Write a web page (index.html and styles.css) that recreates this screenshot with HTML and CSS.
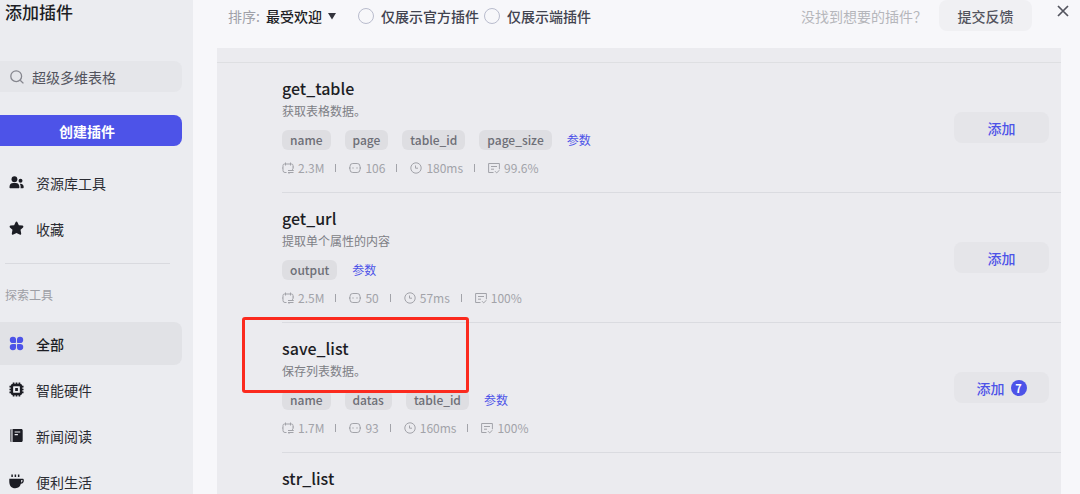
FILE: index.html
```
<!DOCTYPE html>
<html lang="zh-CN">
<head>
    <meta charset="utf-8">
    <title>添加插件</title>
    <meta name="viewport" content="width=device-width, initial-scale=1">
    <link rel="stylesheet" href="styles.css">
</head>
<body>
    <!-- 公共图标 -->
    <svg class="icon-defs" aria-hidden="true">
        <symbol id="i-plug" viewBox="0 0 12 12">
            <path d="M3.500 .5v3M8.500 .5v3M4.500 10.500H3a2 2 0 0 1-2-2v-5A1.500 1.500 0 0 1 2.500 2h7A1.500 1.500 0 0 1 11 3.500V7M0 6h1M11 5h1M6 8.500h5.500L10 7.200M11.500 10.500H6l1.500 1.200"/>
        </symbol>
        <symbol id="i-bot" viewBox="0 0 12 12">
            <rect x="1" y="1.500" width="10" height="9" rx="2.800"/>
            <path d="M.3 5v2M11.700 5v2M4 5.300v1.400M8 5.300v1.400"/>
        </symbol>
        <symbol id="i-clock" viewBox="0 0 12 12">
            <circle cx="6" cy="6" r="5.200"/>
            <path d="M5.500 3.500v2.700h2.500"/>
        </symbol>
        <symbol id="i-rate" viewBox="0 0 12 12">
            <path d="M5.500 10.500H.6v-9h10.800v5.500M3 4.500h6M3 7.200h3M7 9.200l1.700 1.700L11.600 8"/>
        </symbol>
    </svg>

    <div class="dialog">
        <aside class="sidebar">
            <h1>添加插件</h1>
            <label class="search">
                <svg viewBox="0 0 14 14" aria-hidden="true"><circle cx="6.200" cy="6.200" r="5.400"/><path d="M10.200 10.200l3.200 3.200"/></svg>
                <input type="text" value="超级多维表格" aria-label="搜索">
            </label>
            <button class="create" type="button">创建插件</button>

            <nav class="menu">
                <a href="#">
                    <svg viewBox="0 0 16 16" aria-hidden="true"><circle cx="5.800" cy="4.500" r="3.100"/><path d="M.5 13c0-3 1.500-4.600 4-4.600h2.600c2.500 0 4 1.600 4 4.600 0 .8-.4 1.200-1.200 1.200H1.700C.9 14.200.5 13.800.5 13z"/><circle cx="12.300" cy="6.200" r="2.100"/><path d="M11.600 9.300c2.600-.3 4.100 1.200 4.100 3.600 0 .8-.4 1.300-1.200 1.300h-2.200c.4-2-.1-3.800-.7-4.900z"/></svg>
                    资源库工具
                </a>
                <a href="#">
                    <svg viewBox="0 0 16 16" aria-hidden="true"><path d="M7 1.200c.4-.9 1.600-.9 2 0l1.500 3.200 3.800.5c1 .1 1.400 1.200.7 1.900l-2.700 2.600.7 3.900c.2 1-.8 1.700-1.700 1.200L8 12.800l-3.300 1.700c-.9.5-1.900-.2-1.700-1.200l.7-3.900L1 6.800c-.7-.7-.3-1.800.7-1.900l3.800-.5z"/></svg>
                    收藏
                </a>
            </nav>
            <hr>
            <h2>探索工具</h2>
            <nav class="menu">
                <a href="#" class="active">
                    <svg viewBox="0 0 16 16" aria-hidden="true"><path d="M4.200.8a3.300 3.300 0 0 1 3.300 3.400v2.100c0 .8-.4 1.200-1.200 1.200H4.200a3.350 3.350 0 0 1 0-6.700zM11.800.8a3.350 3.350 0 0 1 0 6.700H9.700c-.8 0-1.200-.4-1.200-1.200V4.200A3.300 3.300 0 0 1 11.800.8zM4.200 8.500h2.100c.8 0 1.200.4 1.200 1.200v2.100a3.350 3.350 0 1 1-3.300-3.300zM9.700 8.500h2.100a3.350 3.350 0 1 1-3.300 3.300V9.700c0-.8.4-1.200 1.200-1.200z"/></svg>
                    全部
                </a>
                <a href="#">
                    <svg viewBox="0 0 16 16" aria-hidden="true"><path fill-rule="evenodd" d="M4 .5h1.800v1.300h1.300V.5h1.800v1.300h1.300V.5H12v1.400c1.200.2 2 1 2.100 2.100h1.400v1.800h-1.300v1.300h1.300v1.800h-1.300v1.300h1.300V12h-1.400c-.1 1.200-.9 2-2.100 2.100v1.400h-1.800v-1.300H8.900v1.300H7.100v-1.300H5.800v1.300H4v-1.400c-1.200-.1-2-.9-2.100-2.100H.5v-1.800h1.300V8.900H.5V7.100h1.300V5.800H.5V4h1.400C2 2.900 2.800 2.100 4 1.900zM5 4.500c-.4 0-.6.2-.6.600v5.800c0 .4.200.6.600.6h6c.4 0 .6-.2.600-.6V5.100c0-.4-.2-.6-.6-.6zM6.600 6.500h2.900v3H6.600z"/></svg>
                    智能硬件
                </a>
                <a href="#">
                    <svg viewBox="0 0 16 16" aria-hidden="true"><path d="M1.500 2.200c0-.8.300-1.200 1-1.200v14c-.7 0-1-.4-1-1.200z"/><path fill-rule="evenodd" d="M3.800 1h9.200c1 0 1.600.6 1.600 1.600v10.800c0 1-.6 1.600-1.600 1.600H3.800zM6 3.600v1.200h6V3.600zM6 6.500v1.200h3.500V6.500z"/></svg>
                    新闻阅读
                </a>
                <a href="#">
                    <svg viewBox="0 0 16 16" aria-hidden="true"><path d="M2.500.5h1.600v2.800H2.500zM6 .5h1.600v2.800H6zM9.500.5h1.600v2.800H9.500z"/><path fill-rule="evenodd" d="M.3 5h14.200c.9 0 1.300.6 1.300 1.600 0 2.300-1 3.700-3.200 3.900-.6 2.900-2.400 4.700-5.900 4.700-4.200 0-6.400-2.600-6.400-7.200zM13 6.500v2.600c1-.1 1.400-.9 1.400-2.600z"/></svg>
                    便利生活
                </a>
            </nav>
        </aside>

        <main class="main">
            <header class="toolbar">
                <div class="sort">
                    <label for="sort">排序:</label>
                    <select id="sort">
                        <option>最受欢迎</option>
                    </select>
                    <svg viewBox="0 0 8 8" aria-hidden="true"><path d="M0 1h8L4 7.500z"/></svg>
                </div>
                <label class="radio"><input type="radio" name="filter">仅展示官方插件</label>
                <label class="radio"><input type="radio" name="filter">仅展示端插件</label>
                <span class="hint">没找到想要的插件？</span>
                <button class="feedback" type="button">提交反馈</button>
                <button class="close" type="button" aria-label="关闭">
                    <svg viewBox="0 0 12 12" aria-hidden="true"><path d="M1 1l10 10M11 1L1 11"/></svg>
                </button>
            </header>

            <section class="list">
                <article class="tool">
                    <div class="info">
                        <h3>get_table</h3>
                        <p>获取表格数据。</p>
                        <div class="tags">
                            <span>name</span><span>page</span><span>table_id</span><span>page_size</span>
                            <a href="#">参数</a>
                        </div>
                        <ul class="stats">
                            <li><svg><use href="#i-plug"/></svg>2.3M</li>
                            <li><svg><use href="#i-bot"/></svg>106</li>
                            <li><svg><use href="#i-clock"/></svg>180ms</li>
                            <li><svg><use href="#i-rate"/></svg>99.6%</li>
                        </ul>
                    </div>
                    <button class="add" type="button">添加</button>
                </article>

                <article class="tool">
                    <div class="info">
                        <h3>get_url</h3>
                        <p>提取单个属性的内容</p>
                        <div class="tags">
                            <span>output</span>
                            <a href="#">参数</a>
                        </div>
                        <ul class="stats">
                            <li><svg><use href="#i-plug"/></svg>2.5M</li>
                            <li><svg><use href="#i-bot"/></svg>50</li>
                            <li><svg><use href="#i-clock"/></svg>57ms</li>
                            <li><svg><use href="#i-rate"/></svg>100%</li>
                        </ul>
                    </div>
                    <button class="add" type="button">添加</button>
                </article>

                <article class="tool marked">
                    <div class="info">
                        <h3>save_list</h3>
                        <p>保存列表数据。</p>
                        <div class="tags">
                            <span>name</span><span>datas</span><span>table_id</span>
                            <a href="#">参数</a>
                        </div>
                        <ul class="stats">
                            <li><svg><use href="#i-plug"/></svg>1.7M</li>
                            <li><svg><use href="#i-bot"/></svg>93</li>
                            <li><svg><use href="#i-clock"/></svg>160ms</li>
                            <li><svg><use href="#i-rate"/></svg>100%</li>
                        </ul>
                    </div>
                    <button class="add" type="button">添加<span class="count">7</span></button>
                </article>

                <article class="tool">
                    <div class="info">
                        <h3>str_list</h3>
                    </div>
                </article>
            </section>
        </main>
    </div>
</body>
</html>
```
FILE: styles.css
```
*, *::before, *::after {
    box-sizing: border-box;
}
body {
    margin: 0;
    font-family: "Noto Sans CJK SC", sans-serif;
    font-size: 14px;
    line-height: 20px;
    color: #1c1d24;
    background: #f7f7fa;
}
h1, h2, h3, p, ul {
    margin: 0;
    padding: 0;
}
a {
    text-decoration: none;
}
button, input, select {
    font: inherit;
    color: inherit;
    border: none;
    padding: 0;
    margin: 0;
    background: none;
}
button {
    height: 31px;
    border-radius: 8px;
    font-weight: 500;
    cursor: pointer;
}
.icon-defs {
    display: none;
}
.dialog {
    display: flex;
    height: 100vh;
    overflow: hidden;
}

/* 左侧栏 */
.sidebar {
    flex: none;
    width: 193px;
    padding-right: 11px;
    background: #ebecf0;
}
.sidebar h1 {
    padding-left: 5px;
    font-size: 17px;
    line-height: 24px;
    font-weight: 500;
}
.search {
    display: flex;
    align-items: center;
    gap: 8px;
    height: 31px;
    margin-top: 37px;
    padding-left: 10px;
    border-radius: 0 8px 8px 0;
    background: #e5e6ea;
    color: #53545e;
}
.search svg {
    flex: none;
    width: 14px;
    height: 14px;
    fill: none;
    stroke: #85868e;
    stroke-width: 1.3;
}
.search input {
    flex: 1;
    min-width: 0;
    outline: none;
}
.create {
    display: block;
    width: 100%;
    margin: 23px 0 15px;
    padding-right: 8px;
    border-radius: 0 8px 8px 0;
    background: #4d53e8;
    color: #fff;
    font-weight: 700;
}
.menu {
    display: flex;
    flex-direction: column;
    gap: 3px;
}
.menu a {
    display: flex;
    align-items: center;
    gap: 12px;
    height: 43px;
    padding-left: 9px;
    border-radius: 0 8px 8px 0;
    color: #2b2c33;
}
.menu svg {
    width: 15px;
    height: 15px;
    fill: #1c1d24;
}
.menu .active {
    background: #e1e2e6;
    color: #1c1d24;
    font-weight: 500;
}
.menu .active svg {
    fill: #4d53e8;
}
.sidebar hr {
    height: 1px;
    margin: 13px 12px 0 5px;
    border: none;
    background: #d9dadf;
}
.sidebar h2 {
    margin: 21px 0 17px;
    padding-left: 5px;
    font-size: 12px;
    font-weight: 400;
    color: #9d9ea5;
}

/* 顶部工具栏 */
.main {
    flex: 1;
    min-width: 0;
    padding-left: 24px;
}
.toolbar {
    display: flex;
    align-items: center;
    height: 31px;
    margin-bottom: 17px;
    padding: 0 9px 0 11px;
    white-space: nowrap;
}
.sort {
    display: flex;
    align-items: center;
    gap: 6px;
    margin-right: 22px;
}
.sort label {
    color: #a0a1a8;
}
.sort select {
    appearance: none;
    font-weight: 500;
}
.sort svg {
    width: 8px;
    height: 8px;
    fill: #33343c;
}
.radio {
    display: flex;
    align-items: center;
    gap: 7px;
    margin-right: 5px;
    font-weight: 500;
    color: #41434f;
}
.radio input {
    appearance: none;
    width: 16px;
    height: 16px;
    border: 1px solid #b9bccd;
    border-radius: 50%;
}
.radio input:checked {
    border: 5px solid #4d53e8;
}
.hint {
    margin-left: auto;
    color: #b5b6bb;
}
.feedback {
    width: 93px;
    margin-left: 12px;
    background: #f0f0f3;
    color: #53545e;
}
.close {
    display: flex;
    align-items: center;
    justify-content: center;
    align-self: flex-start;
    width: 16px;
    height: 22px;
    margin-left: 23px;
}
.close svg {
    width: 12px;
    height: 12px;
    stroke: #53545e;
    stroke-width: 1.7;
}

/* 工具列表 */
.list {
    margin-right: 19px;
    padding: 15px 0 0 65px;
    background: linear-gradient(#dedfe2, #dedfe2) 0 14px / 100% 1px no-repeat #ebebef;
}
.tool {
    display: flex;
    align-items: center;
    justify-content: space-between;
    position: relative;
    padding: 13px 12px 13px 0;
    border-bottom: 1px solid #dadbe0;
}
.tool h3 {
    font-size: 16px;
    line-height: 24px;
    font-weight: 500;
}
.tool p {
    margin-top: 1px;
    font-size: 12px;
    color: #7d7e85;
}
.tags {
    display: flex;
    gap: 14px;
    margin-top: 9px;
    font-size: 12px;
}
.tags span {
    padding: 0 8px;
    border-radius: 6px;
    background: #dedee2;
    color: #6d6e76;
    font-weight: 500;
}
.tags a {
    padding-left: 1px;
    color: #4d53e8;
}
.stats {
    display: flex;
    margin: 8px 0 1px;
    list-style: none;
    font-size: 12px;
    color: #a2a3a9;
}
.stats li {
    display: flex;
    align-items: center;
    gap: 4px;
}
.stats li + li::before {
    content: "";
    width: 1px;
    height: 8px;
    margin: 0 9px 0 11px;
    background: #a2a3a9;
}
.stats svg {
    width: 12px;
    height: 12px;
    overflow: visible;
    fill: none;
    stroke: currentColor;
}
.add {
    display: flex;
    align-items: center;
    justify-content: center;
    gap: 6px;
    width: 95px;
    background: #e5e5e9;
    color: #4d53e8;
}
.count {
    width: 16px;
    height: 16px;
    border-radius: 50%;
    background: #4d53e8;
    color: #fff;
    font-size: 11px;
    line-height: 16px;
    font-weight: 700;
}
/* 红框标注 */
.marked::after {
    content: "";
    position: absolute;
    top: -6px;
    left: -40px;
    width: 227px;
    height: 76px;
    border: 3px solid #fb2a1e;
    border-radius: 3px;
}
```
